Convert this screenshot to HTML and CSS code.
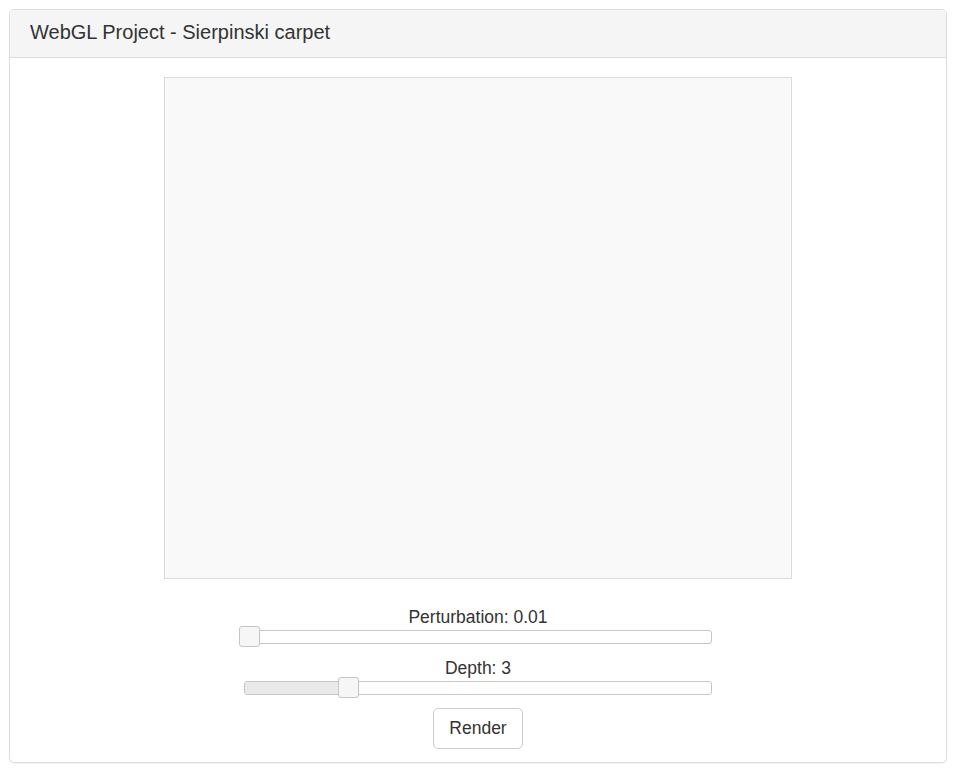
FILE: index.html
```html
<!DOCTYPE html>
<html>
<head>
<meta charset="utf-8">
<title>WebGL Project - Sierpinski carpet</title>
<link rel="stylesheet" href="styles.css">
</head>
<body>
<div class="panel">
  <div class="panel-heading">
    <h3 class="panel-title">WebGL Project - Sierpinski carpet</h3>
  </div>
  <div class="panel-body">
    <div class="canvas"></div>
    <div class="controls">
      <div class="control">
        <div class="label">Perturbation: 0.01</div>
        <div class="slider">
          <span class="handle" style="left: 1%"></span>
        </div>
      </div>
      <div class="control">
        <div class="label">Depth: 3</div>
        <div class="slider">
          <div class="range" style="width: 22.222%"></div>
          <span class="handle" style="left: 22.222%"></span>
        </div>
      </div>
    </div>
    <div class="actions">
      <button class="btn" type="button">Render</button>
    </div>
  </div>
</div>
</body>
</html>
```
FILE: styles.css
```css
* { box-sizing: border-box; }

html, body {
  background: #fff;
}

body {
  margin: 0;
  padding: 9px 7px 9px 9px;
  font-family: "Liberation Sans", Arial, Helvetica, sans-serif;
  font-size: 17.5px;
  line-height: 25px;
  color: #333;
}

.panel {
  border: 1px solid #ddd;
  border-radius: 5px;
  background: #fff;
  box-shadow: 0 1px 1px rgba(0, 0, 0, 0.05);
  overflow: hidden;
}

.panel-heading {
  background: #f5f5f5;
  border-bottom: 1px solid #ddd;
  padding: 11px 20px 13px 20px;
}

.panel-title {
  margin: 0;
  font-size: 20px;
  font-weight: normal;
  line-height: 23px;
  color: #333;
}

.panel-body {
  padding: 19px 20px 13px 20px;
  display: flex;
  flex-direction: column;
  align-items: center;
}

.canvas {
  width: 628px;
  height: 502px;
  background: #f9f9f9;
  border: 1px solid #dcdae6;
}

.controls {
  width: 468px;
  margin-top: 26px;
  display: flex;
  flex-direction: column;
  gap: 12px;
}

.label {
  text-align: center;
  line-height: 25px;
}

.slider {
  position: relative;
  height: 14px;
  border: 1px solid #c5c5c5;
  border-radius: 3px;
  background: #fff;
}

.range {
  height: 100%;
  background: #e9e9e9;
  border-radius: 2px 0 0 2px;
}

.handle {
  position: absolute;
  top: -5px;
  width: 21px;
  height: 21px;
  margin-left: -10.5px;
  background: #f6f6f6;
  border: 1px solid #c5c5c5;
  border-radius: 3px;
}

.actions {
  margin-top: 13px;
  display: flex;
  justify-content: center;
}

.btn {
  font-family: inherit;
  font-size: 17.5px;
  line-height: 25px;
  color: #333;
  background: #fff;
  border: 1px solid #ccc;
  border-radius: 5px;
  padding: 7px 15.5px;
  height: 41px;
  cursor: pointer;
}
```
